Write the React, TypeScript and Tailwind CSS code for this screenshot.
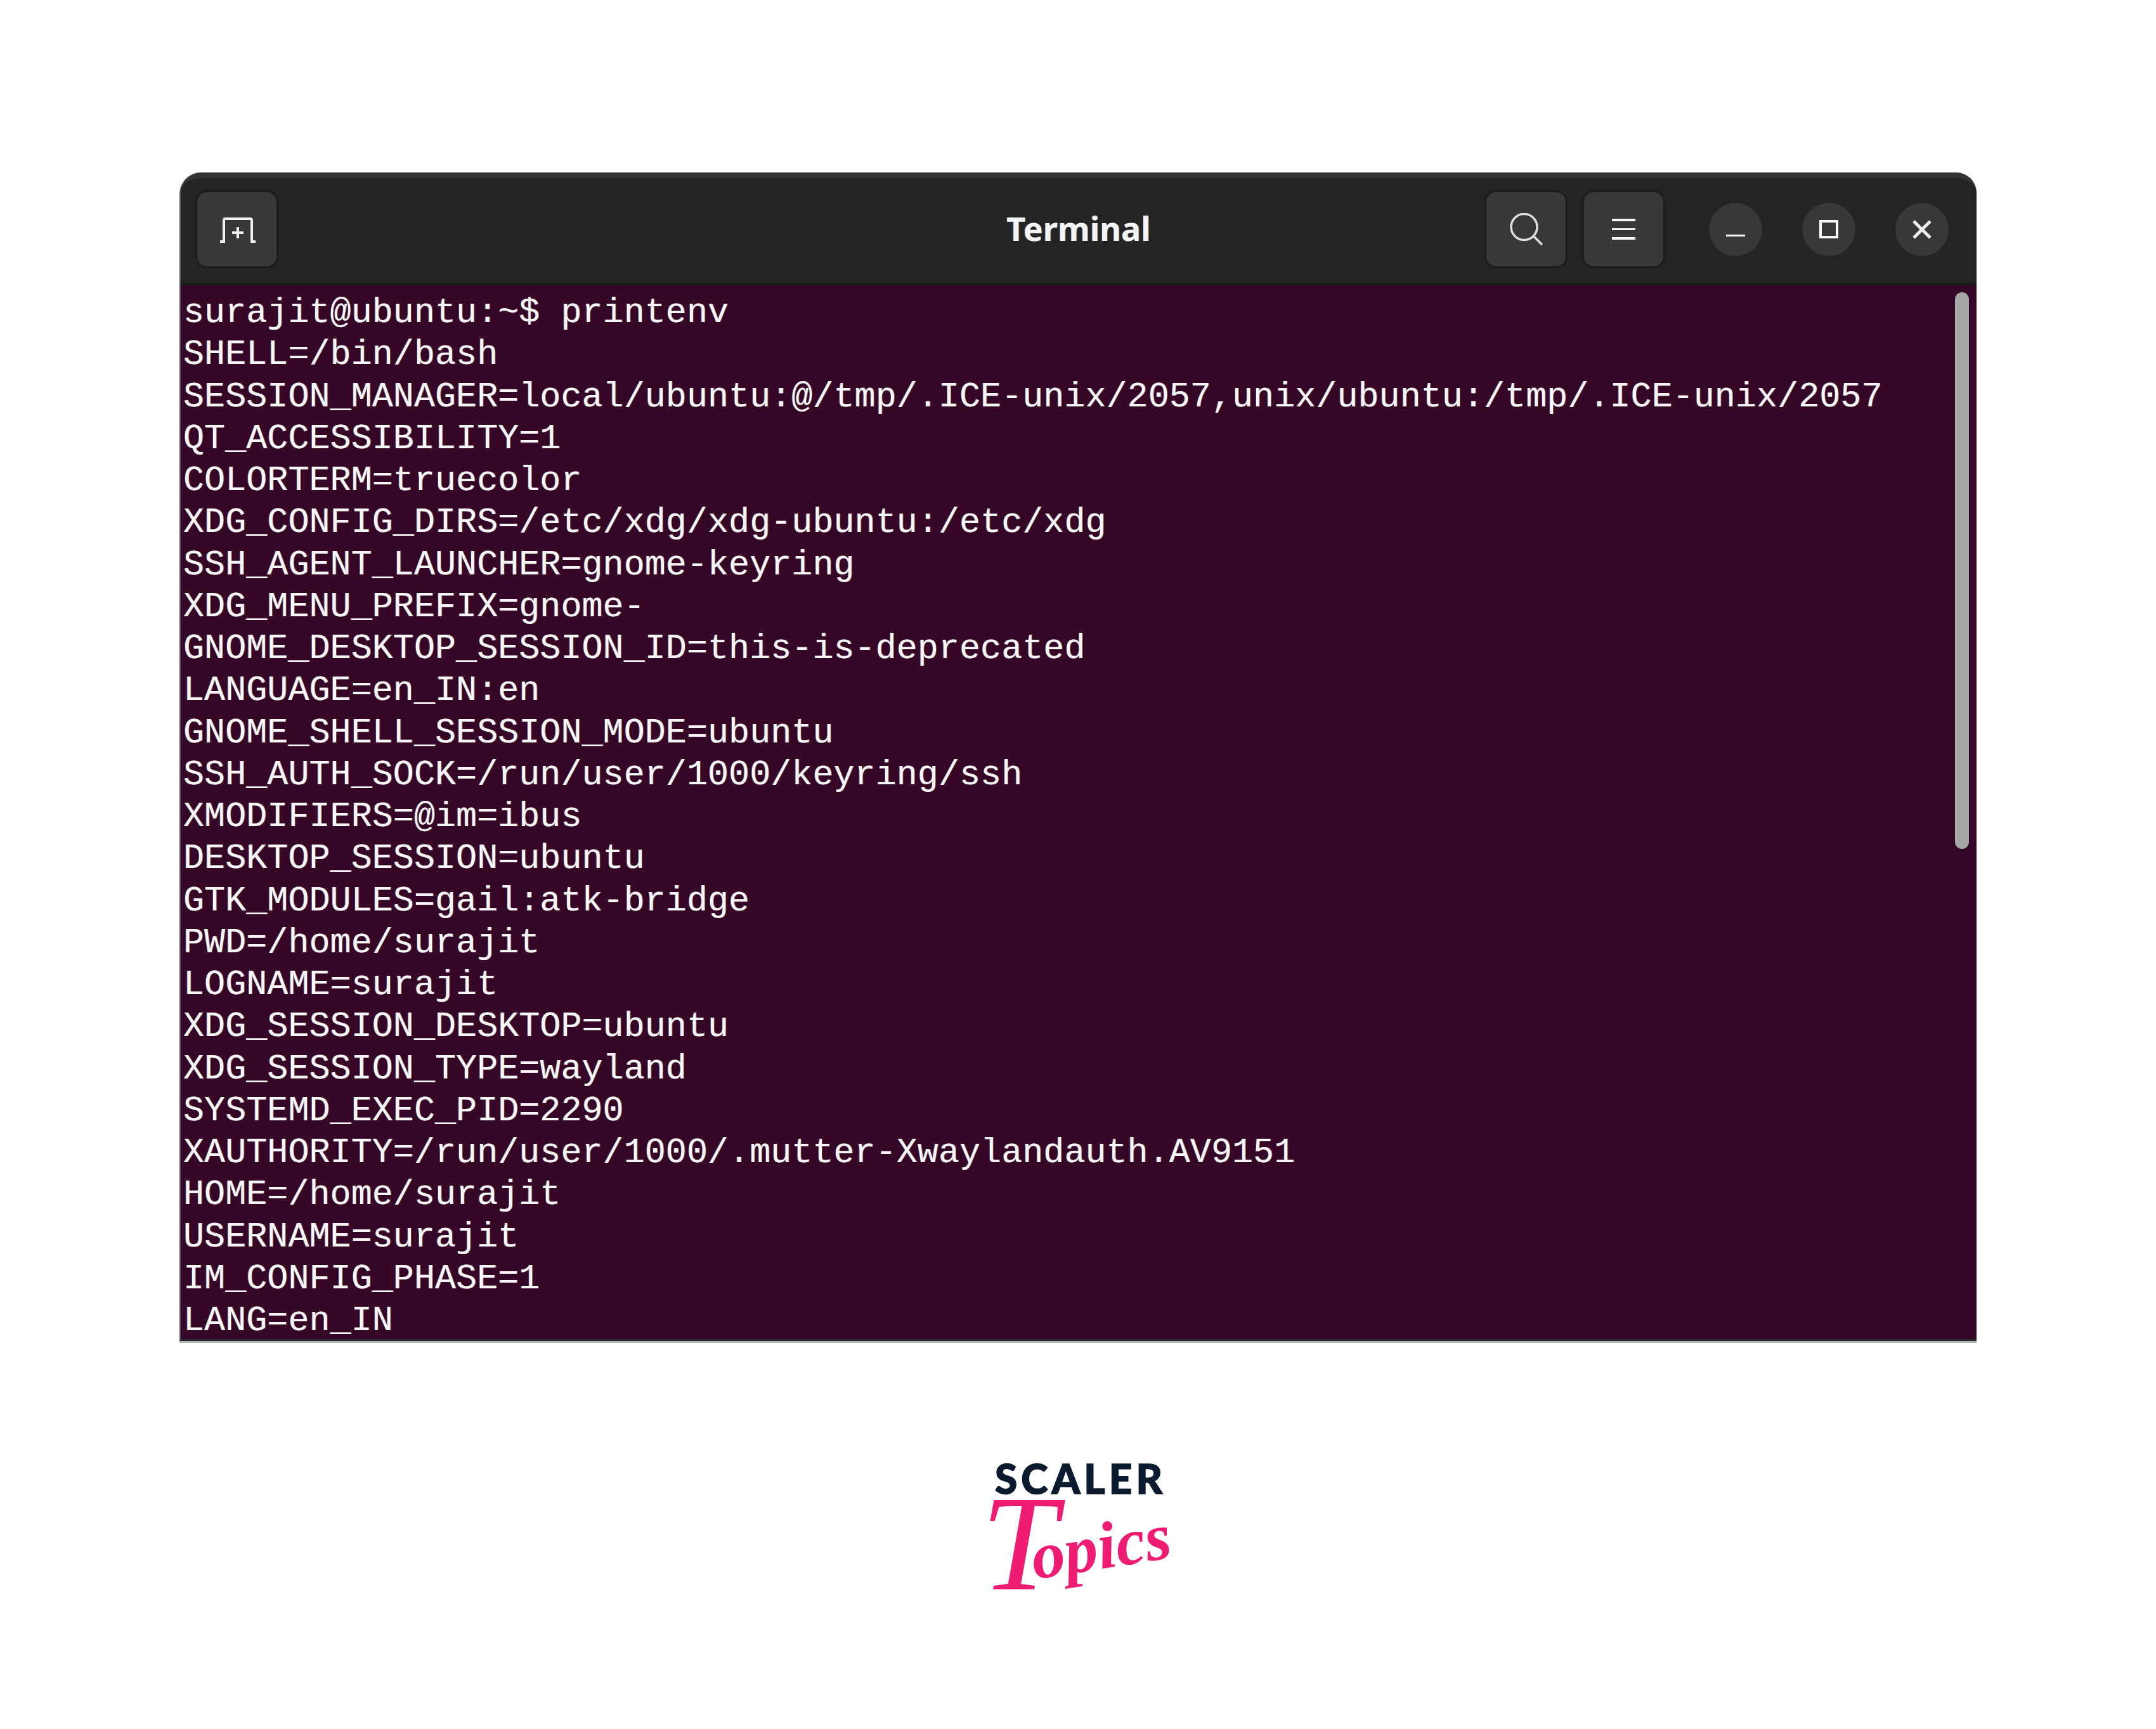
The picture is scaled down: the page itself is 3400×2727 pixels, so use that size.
const lines = [
  "surajit@ubuntu:~$ printenv",
  "SHELL=/bin/bash",
  "SESSION_MANAGER=local/ubuntu:@/tmp/.ICE-unix/2057,unix/ubuntu:/tmp/.ICE-unix/2057",
  "QT_ACCESSIBILITY=1",
  "COLORTERM=truecolor",
  "XDG_CONFIG_DIRS=/etc/xdg/xdg-ubuntu:/etc/xdg",
  "SSH_AGENT_LAUNCHER=gnome-keyring",
  "XDG_MENU_PREFIX=gnome-",
  "GNOME_DESKTOP_SESSION_ID=this-is-deprecated",
  "LANGUAGE=en_IN:en",
  "GNOME_SHELL_SESSION_MODE=ubuntu",
  "SSH_AUTH_SOCK=/run/user/1000/keyring/ssh",
  "XMODIFIERS=@im=ibus",
  "DESKTOP_SESSION=ubuntu",
  "GTK_MODULES=gail:atk-bridge",
  "PWD=/home/surajit",
  "LOGNAME=surajit",
  "XDG_SESSION_DESKTOP=ubuntu",
  "XDG_SESSION_TYPE=wayland",
  "SYSTEMD_EXEC_PID=2290",
  "XAUTHORITY=/run/user/1000/.mutter-Xwaylandauth.AV9151",
  "HOME=/home/surajit",
  "USERNAME=surajit",
  "IM_CONFIG_PHASE=1",
  "LANG=en_IN",
];

function HeaderButton({ children, className }: { children: React.ReactNode; className: string }) {
  return (
    <div className={"flex h-[117px] w-[125px] items-center justify-center rounded-[15px] bg-[#383838] shadow-[0_0_0_3px_#1c1c1c] " + className}>
      {children}
    </div>
  );
}

function RoundButton({ children }: { children: React.ReactNode }) {
  return (
    <div className="flex h-[84px] w-[84px] items-center justify-center rounded-full bg-[#383838]">{children}</div>
  );
}

export default function App() {
  return (
    <div className="flex h-[2727px] w-[3400px] flex-col items-center bg-white pt-[272px]">
      <div className="flex h-[1843px] w-[2834px] flex-col rounded-t-[34px] border-b-[3px] border-l-[2px] border-b-[#2a2a2a] border-l-[#5a5a5a] shadow-[0_3px_0_#b5b5b5]">
        <div className="grid h-[178px] shrink-0 grid-cols-[1fr_auto_1fr] rounded-t-[32px] border-t-[9px] border-b-[4px] border-t-[#333333] border-b-[#1b1b1b] bg-[#242424] pl-[26px] pr-[44px] pt-[22px]">
          <HeaderButton className="">
            <svg className="ml-[3px] mt-[3px]" width="56" height="40" viewBox="0 0 56 40" fill="none" stroke="#f2f2f2" strokeWidth="4">
              <path d="M0 38H6V4.500Q6 2 8.500 2H47.500Q50 2 50 4.500V38H56" />
              <path d="M28 15V33M19 24H37" />
            </svg>
          </HeaderButton>
          <div className="ml-[18px] pt-[31px] font-['Noto_Sans',sans-serif] text-[52px] font-bold leading-none text-[#f4f4f4] [text-shadow:-1px_0_0_rgba(60,140,255,0.45),1px_0_0_rgba(255,150,60,0.45)]">
            Terminal
          </div>
          <div className="flex h-[117px] items-center justify-end">
            <HeaderButton className="">
              <svg width="52" height="51" viewBox="0 0 52 51" fill="none" stroke="#dedede" strokeWidth="3.500">
                <circle cx="22.500" cy="22" r="20.500" />
                <path d="M37 36L51 50" />
              </svg>
            </HeaderButton>
            <HeaderButton className="ml-[29px]">
              <div className="flex flex-col gap-[11px]">
                <div className="h-[4px] w-[37px] bg-[#f8f8f8]" />
                <div className="h-[3px] w-[37px] bg-[#f8f8f8]" />
                <div className="h-[4px] w-[37px] bg-[#f8f8f8]" />
              </div>
            </HeaderButton>
            <div className="ml-[72px] flex items-center gap-[63px]">
              <RoundButton>
                <div className="mt-[19px] h-[3px] w-[30px] bg-[#f8f8f8]" />
              </RoundButton>
              <RoundButton>
                <div className="h-[29px] w-[30px] border-[4px] border-[#f8f8f8]" />
              </RoundButton>
              <RoundButton>
                <svg width="30" height="30" viewBox="0 0 30 30" fill="none" stroke="#f0f0f0" strokeWidth="5">
                  <path d="M2 2L28 28M28 2L2 28" />
                </svg>
              </RoundButton>
            </div>
          </div>
        </div>
        <div className="relative h-0 flex-1 bg-[#360626] pl-[4px] pt-[11px] font-['Liberation_Mono',monospace] text-[55.13px] leading-[66.25px] text-[#f6f6f6] [text-shadow:-1px_0_0_rgba(70,150,255,0.45),1px_0_0_rgba(255,150,60,0.45)]">
          {lines.map((l) => (
            <div key={l} className="whitespace-pre">
              {l}
            </div>
          ))}
          <div className="absolute right-[12px] top-[11px] h-[878px] w-[22px] rounded-full bg-[#a6a6a6]" />
        </div>
      </div>
      <div className="-ml-[6px] mt-[185px] flex flex-col items-center">
        <div className="ml-[14px] font-['Lato',sans-serif] text-[64px] font-black leading-none tracking-[6px] text-[#0b1a2e] [-webkit-text-stroke:1.5px_#0b1a2e]">
          SCALER
        </div>
        <div className="-mt-[6px] flex h-[180px] items-start font-['Liberation_Serif',serif] italic leading-none text-[#ef1c74]">
          <span className="-mt-[32px] text-[215px]">T</span>
          <span className="-ml-[42px] mt-[28px] -rotate-[9deg] text-[105px] font-bold">opics</span>
        </div>
      </div>
    </div>
  );
}
